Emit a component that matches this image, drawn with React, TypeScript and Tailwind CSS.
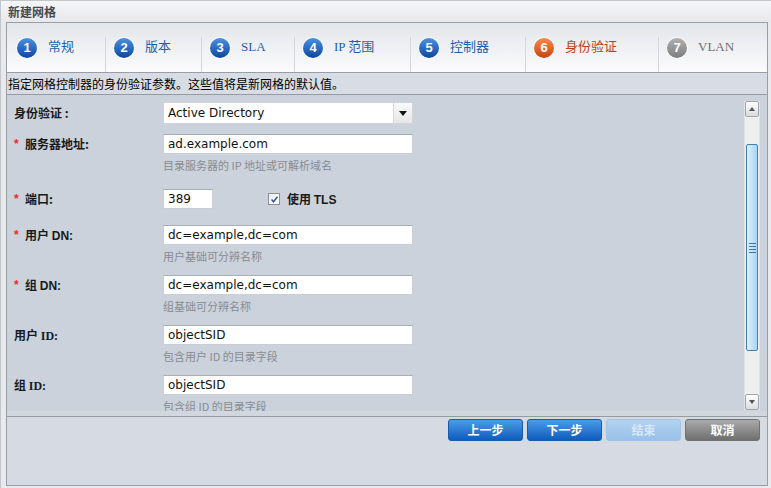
import type { ReactNode } from 'react'

const cjk = "font-['Noto_Sans_CJK_SC',sans-serif]"

type Tab = { n: number; label: string; box: string; state: 'done' | 'active' | 'todo' }

const tabs: Tab[] = [
  { n: 1, label: '常规', box: 'w-[98px] pl-[10px]', state: 'done' },
  { n: 2, label: '版本', box: 'w-[95px] pl-[8px]', state: 'done' },
  { n: 3, label: 'SLA', box: 'w-[92px] pl-[8px]', state: 'done' },
  { n: 4, label: 'IP 范围', box: 'w-[115px] pl-[8px]', state: 'done' },
  { n: 5, label: '控制器', box: 'w-[114px] pl-[8px]', state: 'done' },
  { n: 6, label: '身份验证', box: 'w-[132px] pl-[8px]', state: 'active' },
  { n: 7, label: 'VLAN', box: 'flex-1 pl-[8px]', state: 'todo' },
]

function StepTab({ tab }: { tab: Tab }) {
  const circle =
    tab.state === 'done'
      ? 'from-[#4b92e3] to-[#0b469f]'
      : tab.state === 'active'
        ? 'from-[#f58a46] to-[#c9420b]'
        : 'from-[#b0b0b0] to-[#7e7e7e]'
  const text =
    tab.state === 'done' ? 'text-[#1f5fae]' : tab.state === 'active' ? 'text-[#bf3f0e]' : 'text-[#707070]'
  return (
    <div className={`${tab.box} flex items-center h-full`}>
      <div
        className={`w-[20px] h-[20px] rounded-full bg-linear-to-b ${circle} flex items-center justify-center text-white text-[13px] font-bold font-['Liberation_Sans',sans-serif] shadow-[0_0_0_1px_rgba(255,255,255,0.6)]`}
      >
        {tab.n}
      </div>
      <span className={`ml-[11px] text-[13px] leading-[16px] -mt-[2px] ${text} font-['Liberation_Serif','Noto_Sans_CJK_SC',serif]`}>
        {tab.label}
      </span>
    </div>
  )
}

function Field({
  label,
  required,
  value,
  width = 'w-[250px]',
  hint,
  extra,
  top,
}: {
  label: ReactNode
  required?: boolean
  value: string
  width?: string
  hint?: string
  extra?: ReactNode
  top: string
}) {
  return (
    <div className={top}>
      <div className="flex items-center">
        <div className={`w-[149px] flex items-center text-[12px] font-bold text-[#1a1a1a] ${cjk}`}>
          {required && <span className="text-[#e0302a] w-[11px] font-['Liberation_Sans',sans-serif]">*</span>}
          <span>{label}</span>
        </div>
        <div
          className={`${width} h-[20px] bg-white border border-[#c9ced5] border-t-[#a9aeb5] pl-[4px] flex items-center text-[12px] text-[#111] font-['DejaVu_Sans',sans-serif]`}
        >
          {value}
        </div>
        {extra}
      </div>
      {hint && (
        <div className={`ml-[149px] mt-[4px] text-[11px] leading-[14px] text-[#878c93] ${cjk}`}>{hint}</div>
      )}
    </div>
  )
}

function Serif({ children }: { children: ReactNode }) {
  return <span className="font-['Liberation_Serif',serif]">{children}</span>
}

function ScrollBar() {
  return (
    <div className="w-[16px] mt-[6px] h-[309px] flex flex-col bg-[#efefef] border-x border-[#e2e2e2]">
      <div className="h-[16px] border border-[#a3a7ad] rounded-[2px] bg-linear-to-b from-[#ffffff] to-[#dcdcdc] flex items-center justify-center">
        <div className="w-0 h-0 border-x-[3px] border-x-transparent border-b-[4px] border-b-[#555]" />
      </div>
      <div className="flex-1 pt-[27px] px-px">
        <div className="h-[207px] border border-[#3f7fb2] rounded-[2px] bg-linear-to-r from-[#dcf0fc] to-[#a9d5f3] flex flex-col items-center justify-center gap-[2px]">
          <div className="w-[7px] h-px bg-[#3d76a8]" />
          <div className="w-[7px] h-px bg-[#3d76a8]" />
          <div className="w-[7px] h-px bg-[#3d76a8]" />
          <div className="w-[7px] h-px bg-[#3d76a8]" />
        </div>
      </div>
      <div className="h-[16px] border border-[#a3a7ad] rounded-[2px] bg-linear-to-b from-[#ffffff] to-[#dcdcdc] flex items-center justify-center">
        <div className="w-0 h-0 border-x-[3px] border-x-transparent border-t-[4px] border-t-[#555]" />
      </div>
    </div>
  )
}

function Button({ children, kind }: { children: ReactNode; kind: 'blue' | 'off' | 'gray' }) {
  const look =
    kind === 'blue'
      ? 'from-[#4a9ce9] to-[#0e5cbc] border-[#1b5ba8] text-white'
      : kind === 'off'
        ? 'from-[#b3d2f0] to-[#98c0e8] border-[#9fc3e6] text-[#d9e8f7]'
        : 'from-[#ababab] to-[#6f6f6f] border-[#717171] text-white'
  return (
    <div
      className={`w-[75px] h-[22px] rounded-[3px] border bg-linear-to-b ${look} flex items-center justify-center text-[12px] font-bold ${cjk}`}
    >
      {children}
    </div>
  )
}

export default function App() {
  return (
    <div className={`w-[771px] h-[488px] bg-[#e8eaed] border-l border-t border-[#c2c6cb] overflow-hidden ${cjk}`}>
      <div className="h-[21px] bg-linear-to-b from-[#f5f6f8] to-[#e6e8eb] pl-[7px] flex items-center text-[12px] font-bold text-[#46494e]">
        新建网格
      </div>

      <div className="ml-[5px] w-[762px] h-[464px] border border-[#9a9ea5] bg-[#d6dbe3] flex flex-col">
        <div className="h-[50px] border-b border-[#9a9ea5] bg-linear-to-b from-[#e3e6ea] to-[#fbfbfc] flex">
          {tabs.map((t, i) => (
            <div key={t.n} className={`flex h-full ${t.n === 7 ? 'flex-1' : ''}`}>
              {i > 0 && <div className="w-px self-end h-[35px] bg-[#d3d6db]" />}
              <StepTab tab={t} />
            </div>
          ))}
        </div>

        <div className="h-[21px] bg-[#d8dde5] flex items-center pl-px text-[12px] text-black">
          指定网格控制器的身份验证参数。这些值将是新网格的默认值。
        </div>

        <div className="h-[323px] border-t border-b border-[#969ba2] bg-[#d2d7df] flex flex-col">
          <div className="h-[316px] bg-[#cbd2db] flex overflow-hidden">
            <div className="flex-1 pl-[7px]">
              <div className="mt-[7px] flex items-center">
                <div className="w-[149px] text-[12px] font-bold text-[#1a1a1a]">身份验证 :</div>
                <div className="w-[250px] h-[22px] bg-white border border-[#d0d4da] flex">
                  <div className="flex-1 pl-[4px] flex items-center text-[12px] text-[#111] font-['DejaVu_Sans',sans-serif]">
                    Active Directory
                  </div>
                  <div className="w-[19px] border-l border-[#d6d9dd] bg-linear-to-b from-[#fafafa] to-[#e6e6e6] flex items-center justify-center">
                    <div className="w-0 h-0 border-x-[4px] border-x-transparent border-t-[5px] border-t-[#111]" />
                  </div>
                </div>
              </div>

              <Field
                top="mt-[10px]"
                required
                label="服务器地址:"
                value="ad.example.com"
                hint="目录服务器的 IP 地址或可解析域名"
              />

              <Field
                top="mt-[17px]"
                required
                label="端口:"
                value="389"
                width="w-[50px]"
                extra={
                  <div className="ml-[55px] flex items-center">
                    <div className="w-[12px] h-[12px] border border-[#8b9097] bg-linear-to-br from-[#e9ecf0] to-white flex items-center justify-center">
                      <svg width="9" height="9" viewBox="0 0 9 9">
                        <path d="M1.5 4.5 L3.5 6.8 L7.5 1.8" fill="none" stroke="#3e5a8c" strokeWidth="1.6" />
                      </svg>
                    </div>
                    <span className="ml-[7px] text-[12px] font-bold text-[#1a1a1a]">
                      使用 <span className="font-['Liberation_Sans',sans-serif]">TLS</span>
                    </span>
                  </div>
                }
              />

              <Field
                top="mt-[16px]"
                required
                label={
                  <>
                    用户 <span className="font-['Liberation_Sans',sans-serif]">DN:</span>
                  </>
                }
                value="dc=example,dc=com"
                hint="用户基础可分辨名称"
              />

              <Field
                top="mt-[12px]"
                required
                label={
                  <>
                    组 <span className="font-['Liberation_Sans',sans-serif]">DN:</span>
                  </>
                }
                value="dc=example,dc=com"
                hint="组基础可分辨名称"
              />

              <Field
                top="mt-[12px]"
                label={
                  <>
                    用户 <Serif>ID:</Serif>
                  </>
                }
                value="objectSID"
                hint="包含用户 ID 的目录字段"
              />

              <Field
                top="mt-[12px]"
                label={
                  <>
                    组 <Serif>ID:</Serif>
                  </>
                }
                value="objectSID"
                hint="包含组 ID 的目录字段"
              />
            </div>
            <div className="mr-[7px]">
              <ScrollBar />
            </div>
          </div>
        </div>

        <div className="flex justify-end gap-[4px] pr-[7px] pt-[2px]">
          <Button kind="blue">上一步</Button>
          <Button kind="blue">下一步</Button>
          <Button kind="off">结束</Button>
          <Button kind="gray">取消</Button>
        </div>
      </div>
    </div>
  )
}
